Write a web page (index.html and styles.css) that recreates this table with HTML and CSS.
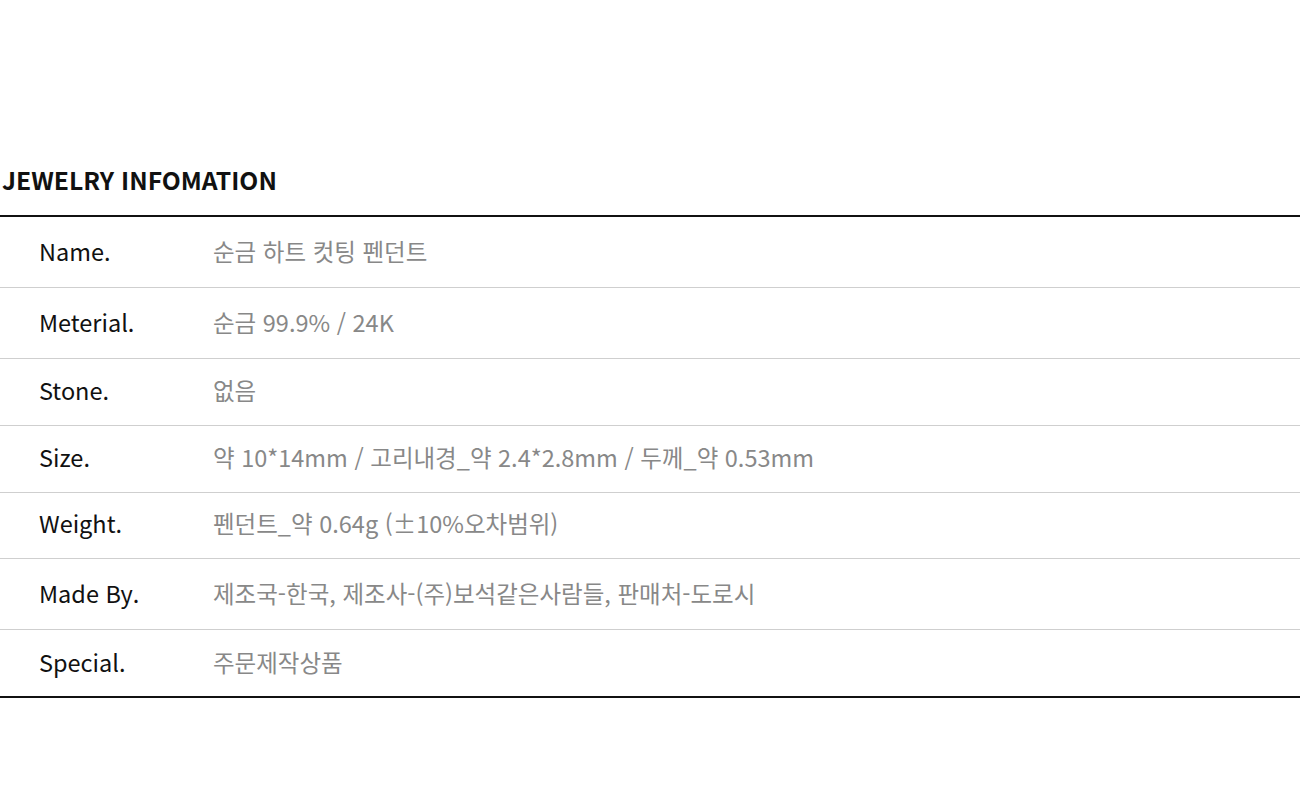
FILE: index.html
```html
<!DOCTYPE html>
<html lang="ko">
<head>
<meta charset="utf-8">
<title>Jewelry Information</title>
<link rel="stylesheet" href="styles.css">
</head>
<body>
<section class="info">
  <h2 class="info-title">JEWELRY INFOMATION</h2>
  <div class="info-table">
    <div class="row h70"><div class="label">Name.</div><div class="value">순금 하트 컷팅 펜던트</div></div>
    <div class="row h70"><div class="label">Meterial.</div><div class="value">순금 99.9% / 24K</div></div>
    <div class="row h66"><div class="label">Stone.</div><div class="value">없음</div></div>
    <div class="row h66"><div class="label">Size.</div><div class="value">약 10*14mm / 고리내경_약 2.4*2.8mm / 두께_약 0.53mm</div></div>
    <div class="row h65"><div class="label">Weight.</div><div class="value">펜던트_약 0.64g (±10%오차범위)</div></div>
    <div class="row h70"><div class="label">Made By.</div><div class="value">제조국-한국, 제조사-(주)보석같은사람들, 판매처-도로시</div></div>
    <div class="row h66 last"><div class="label">Special.</div><div class="value">주문제작상품</div></div>
  </div>
</section>
</body>
</html>
```
FILE: styles.css
```css
html, body {
  margin: 0;
  padding: 0;
  background: #fff;
}
body {
  font-family: "Noto Sans CJK KR", "Noto Sans", sans-serif;
  color: #111;
}
.info {
  padding-top: 161px;
}
.info-title {
  margin: 0 0 0 2px;
  font-size: 24.7px;
  font-weight: 700;
  line-height: 36px;
  color: #111;
}
.info-table {
  margin-top: 18px;
  border-top: 2px solid #111;
}
.row {
  display: flex;
  align-items: center;
  border-bottom: 1px solid #cfcfcf;
  box-sizing: border-box;
}
.row.last {
  border-bottom: 2px solid #111;
}
.h70 { height: 71px; padding-bottom: 2px; }
.h66 { height: 67px; padding-bottom: 5px; }
.h65 { height: 66px; padding-bottom: 6px; }
.row.last { height: 68px; padding-bottom: 3px; }
.label {
  width: 174px;
  padding-left: 39px;
  font-size: 23.5px;
  color: #111;
  flex-shrink: 0;
}
.value {
  font-size: 23.5px;
  color: #888;
}
```
